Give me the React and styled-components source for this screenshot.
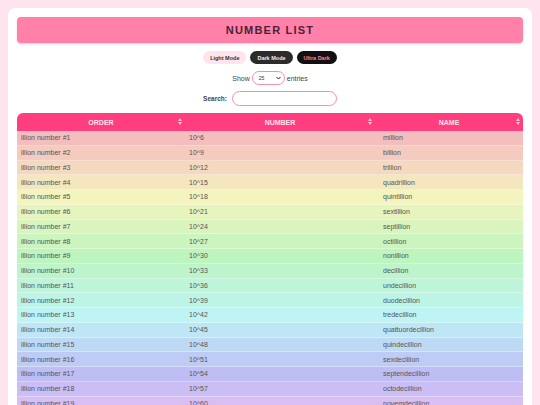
import React from "react";
import styled, { createGlobalStyle } from "styled-components";

const Global = createGlobalStyle`
  html, body { margin: 0; padding: 0; }
  body {
    background: #fde4ee;
    font-family: "Liberation Sans", Arial, sans-serif;
    padding: 8px;
    height: 405px;
    box-sizing: border-box;
    overflow: hidden;
  }
`;

const Card = styled.div`
  background: #ffffff;
  border-radius: 7px;
  padding: 9px 9px 0 9px;
  height: 420px;
  box-sizing: border-box;
`;

const TitleBar = styled.div`
  background: #ff80a8;
  border-radius: 4px;
  height: 26px;
  display: flex;
  align-items: center;
  justify-content: center;
  box-shadow: 0 1px 2px rgba(255, 100, 150, 0.35);
`;

const Title = styled.h1`
  margin: 0;
  font-size: 11px;
  font-weight: bold;
  letter-spacing: 1.2px;
  color: #4a2238;
`;

const ModeRow = styled.div`
  display: flex;
  justify-content: center;
  gap: 4px;
  margin-top: 8px;
`;

const ModeButton = styled.button`
  border: none;
  border-radius: 7px;
  height: 13px;
  padding: 0 7px;
  font-family: "Liberation Sans", Arial, sans-serif;
  font-size: 5.5px;
  font-weight: bold;
  background: ${(p) => p.$bg};
  color: ${(p) => p.$fg};
  cursor: pointer;
`;

const ShowRow = styled.div`
  display: flex;
  justify-content: center;
  align-items: center;
  gap: 2px;
  margin-top: 7px;
  font-size: 7px;
  color: #444;
`;

const Select = styled.div`
  width: 33px;
  height: 14px;
  box-sizing: border-box;
  border: 1px solid #f28fb0;
  border-radius: 7px;
  display: flex;
  align-items: center;
  justify-content: space-between;
  padding: 0 3px 0 6px;
  font-size: 5px;
  color: #333;
`;

const SearchRow = styled.div`
  display: flex;
  justify-content: center;
  align-items: center;
  gap: 5px;
  margin-top: 6px;
  font-size: 6.5px;
  font-weight: bold;
  color: #444;
`;

const SearchInput = styled.div`
  width: 105px;
  height: 15px;
  box-sizing: border-box;
  border: 1px solid #f28fb0;
  border-radius: 8px;
`;

const Table = styled.div`
  margin-top: 7px;
  display: grid;
  grid-template-columns: 168px 190px 1fr;
  border-radius: 6px 6px 0 0;
  overflow: hidden;
`;

const HeadCell = styled.div`
  background: #ff3d7f;
  height: 18px;
  position: relative;
  display: flex;
  align-items: center;
  justify-content: center;
  color: #ffe6ef;
  font-size: 7px;
  font-weight: bold;
`;

const Sort = styled.span`
  position: absolute;
  right: 3px;
  top: 5px;
  line-height: 1;
`;

const Cell = styled.div`
  background: ${(p) => p.$bg};
  height: 14.75px;
  box-sizing: border-box;
  border-bottom: 1px solid rgba(255, 255, 255, 0.35);
  display: flex;
  align-items: center;
  padding-left: ${(p) => p.$pl}px;
  font-size: 7px;
  color: #555;
  white-space: nowrap;
`;

const names = [
  "million", "billion", "trillion", "quadrillion", "quintillion", "sextillion",
  "septillion", "octillion", "nonillion", "decillion", "undecillion", "duodecillion",
  "tredecillion", "quattuordecillion", "quindecillion", "sexdecillion",
  "septendecillion", "octodecillion", "novemdecillion",
];

const SortIcon = () => (
  <Sort>
    <svg width="4" height="7" viewBox="0 0 4 7">
      <path d="M2 0 L4 3 L0 3 Z" fill="#ffc0d4" />
      <path d="M2 7 L4 4 L0 4 Z" fill="#ffc0d4" />
    </svg>
  </Sort>
);

export default function App() {
  return (
    <>
      <Global />
      <Card>
        <TitleBar>
          <Title>NUMBER LIST</Title>
        </TitleBar>
        <ModeRow>
          <ModeButton $bg="#fde4ee" $fg="#333">Light Mode</ModeButton>
          <ModeButton $bg="#2b2b2b" $fg="#eee">Dark Mode</ModeButton>
          <ModeButton $bg="#111111" $fg="#ff80a8">Ultra Dark</ModeButton>
        </ModeRow>
        <ShowRow>
          <span>Show</span>
          <Select>
            <span>25</span>
            <svg width="5" height="4" viewBox="0 0 5 4">
              <path d="M0.5 1 L2.5 3 L4.5 1" stroke="#222" strokeWidth="1" fill="none" />
            </svg>
          </Select>
          <span>entries</span>
        </ShowRow>
        <SearchRow>
          <span>Search:</span>
          <SearchInput />
        </SearchRow>
        <Table>
          <HeadCell>ORDER<SortIcon /></HeadCell>
          <HeadCell>NUMBER<SortIcon /></HeadCell>
          <HeadCell>NAME<SortIcon /></HeadCell>
          {names.map((n, i) => {
            const bg = `hsl(${i * 15}, 70%, 85%)`;
            return (
              <React.Fragment key={n}>
                <Cell $bg={bg} $pl={4}>illion number #{i + 1}</Cell>
                <Cell $bg={bg} $pl={4}>10^{(i + 2) * 3}</Cell>
                <Cell $bg={bg} $pl={8}>{n}</Cell>
              </React.Fragment>
            );
          })}
        </Table>
      </Card>
    </>
  );
}
